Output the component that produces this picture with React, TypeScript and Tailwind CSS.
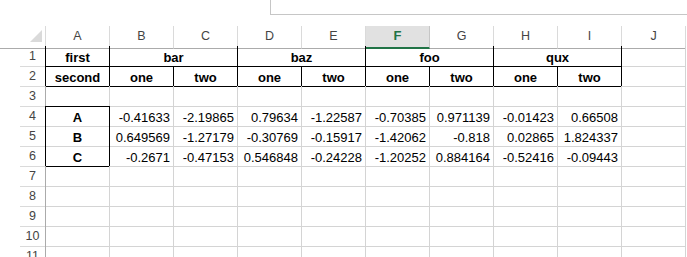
import React from "react";

type Cell = {
  t?: string;
  span?: number;
  bold?: boolean;
  center?: boolean;
  r?: boolean; // black right border
  b?: boolean; // black bottom border
};

const COLS = ["A", "B", "C", "D", "E", "F", "G", "H", "I", "J"];
const ACTIVE_COL = "F";

const hdr = (t: string, span = 1): Cell => ({ t, span, bold: true, center: true, r: true, b: true });

const num = (t: string): Cell => ({ t });

const emptyRow = (): Cell[] => COLS.map(() => ({}));

const ROWS: { n: number; blackHead?: boolean; cells: Cell[] }[] = [
  {
    n: 1,
    blackHead: true,
    cells: [hdr("first"), hdr("bar", 2), hdr("baz", 2), hdr("foo", 2), hdr("qux", 2), {}],
  },
  {
    n: 2,
    blackHead: true,
    cells: [
      hdr("second"),
      hdr("one"), hdr("two"), hdr("one"), hdr("two"),
      hdr("one"), hdr("two"), hdr("one"), hdr("two"),
      {},
    ],
  },
  { n: 3, cells: [{ b: true }, {}, {}, {}, {}, {}, {}, {}, {}, {}] },
  {
    n: 4,
    blackHead: true,
    cells: [
      { t: "A", bold: true, center: true, r: true },
      num("-0.41633"), num("-2.19865"), num("0.79634"), num("-1.22587"),
      num("-0.70385"), num("0.971139"), num("-0.01423"), num("0.66508"),
      {},
    ],
  },
  {
    n: 5,
    blackHead: true,
    cells: [
      { t: "B", bold: true, center: true, r: true },
      num("0.649569"), num("-1.27179"), num("-0.30769"), num("-0.15917"),
      num("-1.42062"), num("-0.818"), num("0.02865"), num("1.824337"),
      {},
    ],
  },
  {
    n: 6,
    blackHead: true,
    cells: [
      { t: "C", bold: true, center: true, r: true, b: true },
      num("-0.2671"), num("-0.47153"), num("0.546848"), num("-0.24228"),
      num("-1.20252"), num("0.884164"), num("-0.52416"), num("-0.09443"),
      {},
    ],
  },
  { n: 7, cells: emptyRow() },
  { n: 8, cells: emptyRow() },
  { n: 9, cells: emptyRow() },
  { n: 10, cells: emptyRow() },
  { n: 11, cells: emptyRow() },
];

function ColumnHeader() {
  return (
    <div className="grid h-5 grid-cols-[46px_repeat(10,64px)]">
      <div className="flex items-start border-b border-r border-b-[#ababab] border-r-[#dadada] pl-[30px] pt-1">
        <div className="h-0 w-0 border-b-[12px] border-l-[12px] border-b-[#dadada] border-l-transparent" />
      </div>
      {COLS.map((c) =>
        c === ACTIVE_COL ? (
          <div
            key={c}
            className="flex items-center justify-center border-b-2 border-r border-b-[#217346] border-r-[#c6c6c6] bg-[#e1e1e1] pb-px text-[13px] font-bold text-[#217346]"
          >
            {c}
          </div>
        ) : (
          <div
            key={c}
            className="flex items-center justify-center border-b border-r border-b-[#ababab] border-r-[#dadada] text-[12.5px] text-[#444]"
          >
            {c}
          </div>
        )
      )}
    </div>
  );
}

function DataRow({ row }: { row: (typeof ROWS)[number] }) {
  return (
    <div className="grid h-5 grid-cols-[46px_repeat(10,64px)]">
      <div className="pl-5">
        <div
          className={`flex h-full items-center justify-center border-b border-r border-b-[#dadada] pt-px text-[12.5px] text-[#444] ${
            row.blackHead ? "border-r-black" : "border-r-[#ababab]"
          }`}
        >
          {row.n}
        </div>
      </div>
      {row.cells.map((c, i) => (
        <div
          key={i}
          className={`flex items-center overflow-hidden whitespace-nowrap border-b border-r pt-[3px] text-[13px] text-black ${
            c.span === 2 ? "col-span-2" : ""
          } ${c.r ? "border-r-black" : "border-r-[#d4d4d4]"} ${
            c.b ? "border-b-black" : "border-b-[#d4d4d4]"
          } ${c.center ? "justify-center" : "justify-end pr-[3px]"} ${c.bold ? "font-bold" : ""}`}
        >
          {c.t}
        </div>
      ))}
    </div>
  );
}

export default function App() {
  return (
    <main
      className="h-[257px] w-[687px] overflow-hidden bg-white"
      style={{ fontFamily: '"Liberation Sans", Arial, sans-serif' }}
    >
      {/* formula bar edge */}
      <div className="h-[26px]">
        <div className="ml-[270px] h-[15px] border-b border-l border-[#c6c6c6]" />
      </div>
      <ColumnHeader />
      {ROWS.map((row) => (
        <DataRow key={row.n} row={row} />
      ))}
    </main>
  );
}
